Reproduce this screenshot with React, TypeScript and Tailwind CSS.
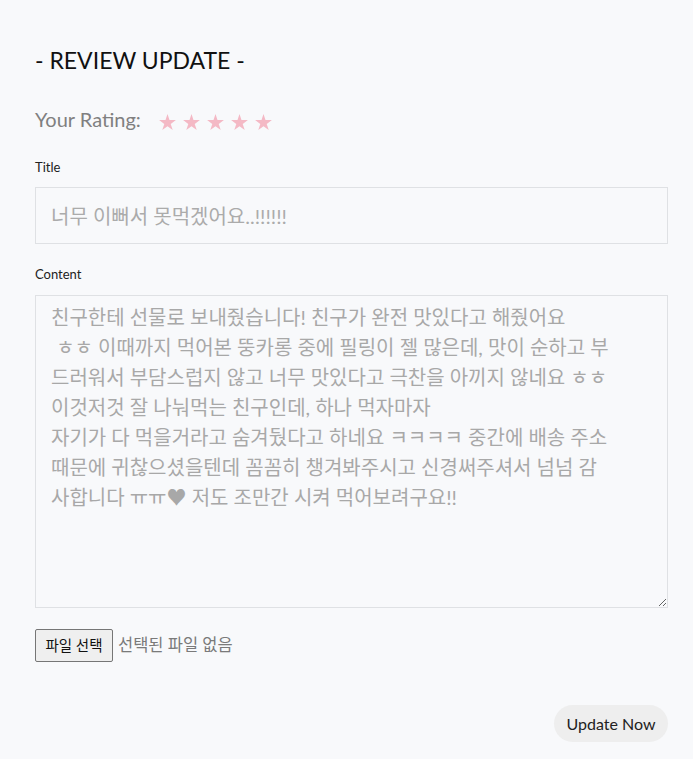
import React from "react";

const font = { fontFamily: "Lato, 'Noto Sans CJK KR', sans-serif" };

const content =
  "친구한테 선물로 보내줬습니다! 친구가 완전 맛있다고 해줬어요\n ㅎㅎ 이때까지 먹어본 뚱카롱 중에 필링이 젤 많은데, 맛이 순하고 부\n드러워서 부담스럽지 않고 너무 맛있다고 극찬을 아끼지 않네요 ㅎㅎ\n이것저것 잘 나눠먹는 친구인데, 하나 먹자마자\n자기가 다 먹을거라고 숨겨뒀다고 하네요 ㅋㅋㅋㅋ 중간에 배송 주소\n때문에 귀찮으셨을텐데 꼼꼼히 챙겨봐주시고 신경써주셔서 넘넘 감\n사합니다 ㅠㅠ♥ 저도 조만간 시켜 먹어보려구요!!";

function Star() {
  return (
    <svg width="17" height="16" viewBox="0 0 20 19" className="block">
      <path
        d="M10 0 L12.36 7.26 L20 7.26 L13.82 11.74 L16.18 19 L10 14.51 L3.82 19 L6.18 11.74 L0 7.26 L7.64 7.26 Z"
        fill="#f4b9c5"
      />
    </svg>
  );
}

export default function App() {
  return (
    <div className="min-h-[759px] w-full bg-[#f8f9fb]" style={font}>
      <div className="pl-[35px] pr-[25px] pt-[46px] pb-4">
        <h1 className="text-[23px] leading-[28px] text-[#111]">- REVIEW UPDATE -</h1>
        <div className="mt-[33px] flex items-start">
          <span className="text-[20px] leading-[24px] text-[#808080]">Your Rating:</span>
          <div className="ml-[18px] mt-[7px] flex gap-[7px]">
            <Star />
            <Star />
            <Star />
            <Star />
            <Star />
          </div>
        </div>
        <label className="mt-[28px] block text-[13px] leading-[16px] text-[#222]">Title</label>
        <input
          className="mt-[12px] block h-[57px] w-full border border-[#dfe1e4] bg-transparent px-[15px] text-[20px] text-[#999] outline-none placeholder:text-[#ababab]"
          placeholder="너무 이뻐서 못먹겠어요..!!!!!!"
          style={font}
        />
        <label className="mt-[22px] block text-[13px] leading-[16px] text-[#222]">Content</label>
        <textarea
          className="mt-[13px] block h-[313px] w-full resize-y border border-[#dfe1e4] bg-transparent pl-[15px] pr-[8px] pt-[6px] text-[20px] leading-[30px] text-[#a8a8a8] outline-none"
          defaultValue={content}
          style={font}
        />
        <div className="mt-[21px] flex items-center">
          <button className="h-[33px] w-[78px] rounded-[2px] border border-[#767676] bg-[#efefef] text-[14.5px] text-[#111]">
            파일 선택
          </button>
          <span className="ml-[5px] text-[16.5px] text-[#7a7a7a]">선택된 파일 없음</span>
        </div>
        <div className="mt-[43px] flex justify-end">
          <button className="h-[37px] w-[114px] rounded-full bg-[#eeeeee] text-[16px] text-[#222]">
            Update Now
          </button>
        </div>
      </div>
    </div>
  );
}
